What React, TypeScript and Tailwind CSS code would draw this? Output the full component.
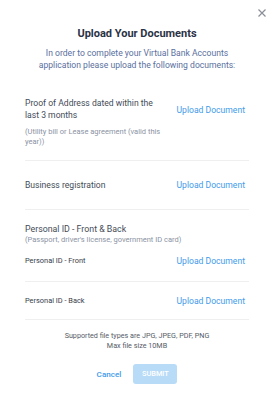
import React from "react";

const font = { fontFamily: 'Roboto, Lato, "Noto Sans", sans-serif' };

function Upload() {
  return <button className="block text-[8.6px] leading-[12px] text-[#3f9bea] pr-[4px] whitespace-nowrap">Upload Document</button>;
}

export default function App() {
  return (
    <div style={font} className="w-[274px] h-[401px] bg-white relative">
      <button className="absolute right-[8px] top-[9px] text-[#8a8f98]">
        <svg width="8" height="8" viewBox="0 0 8 8" className="block"><path d="M0.5 0.5L7.5 7.5M7.5 0.5L0.5 7.5" stroke="currentColor" strokeWidth="1.2" /></svg>
      </button>
      <div className="pt-[27px] flex flex-col items-center">
        <h1 className="text-[11px] leading-[14px] font-bold text-[#2b3245]">Upload Your Documents</h1>
        <p className="mt-[6px] text-center text-[8.6px] leading-[12px] text-[#5a6f9e]">
          In order to complete your Virtual Bank Accounts<br />application please upload the following documents:
        </p>
      </div>
      <div className="px-[25px] mt-[26px]">
        <div className="flex justify-between items-start pb-[13px] border-b border-[#efefef]">
          <div className="w-[138px]">
            <div className="text-[8.6px] leading-[12px] text-[#444b57]">Proof of Address dated within the last 3 months</div>
            <div className="mt-[6px] text-[7.5px] leading-[10px] text-[#8b93a3]">(Utility bill or Lease agreement (valid this year))</div>
          </div>
          <div className="mt-[7px]"><Upload /></div>
        </div>
        <div className="flex justify-between items-center h-[49px] border-b border-[#efefef]">
          <div className="text-[8.6px] leading-[12px] text-[#444b57]">Business registration</div>
          <Upload />
        </div>
        <div className="pt-[13px]">
          <div className="text-[8.8px] leading-[12px] text-[#444b57]">Personal ID - Front &amp; Back</div>
          <div className="text-[7.5px] leading-[10px] text-[#8b93a3]">(Passport, driver's license, government ID card)</div>
        </div>
        <div className="flex justify-between items-center pt-[10px] pb-[14px] border-b border-[#efefef]">
          <div className="text-[7.4px] leading-[12px] text-[#363c48]">Personal ID - Front</div>
          <Upload />
        </div>
        <div className="flex justify-between items-center h-[38px] border-b border-[#efefef]">
          <div className="text-[7.4px] leading-[12px] text-[#363c48]">Personal ID - Back</div>
          <Upload />
        </div>
        <div className="mt-[11px] text-center text-[7.2px] leading-[10px] text-[#555b66]">
          Supported file types are JPG, JPEG, PDF, PNG<br />Max file size 10MB
        </div>
        <div className="mt-[13px] flex justify-center items-center gap-[12px]">
          <button className="text-[8.1px] leading-[12px] text-[#3f9bea] font-medium">Cancel</button>
          <button className="h-[20px] w-[44px] rounded-[3px] bg-[#b8dbf8] text-white text-[7.4px] font-medium">SUBMIT</button>
        </div>
      </div>
    </div>
  );
}
